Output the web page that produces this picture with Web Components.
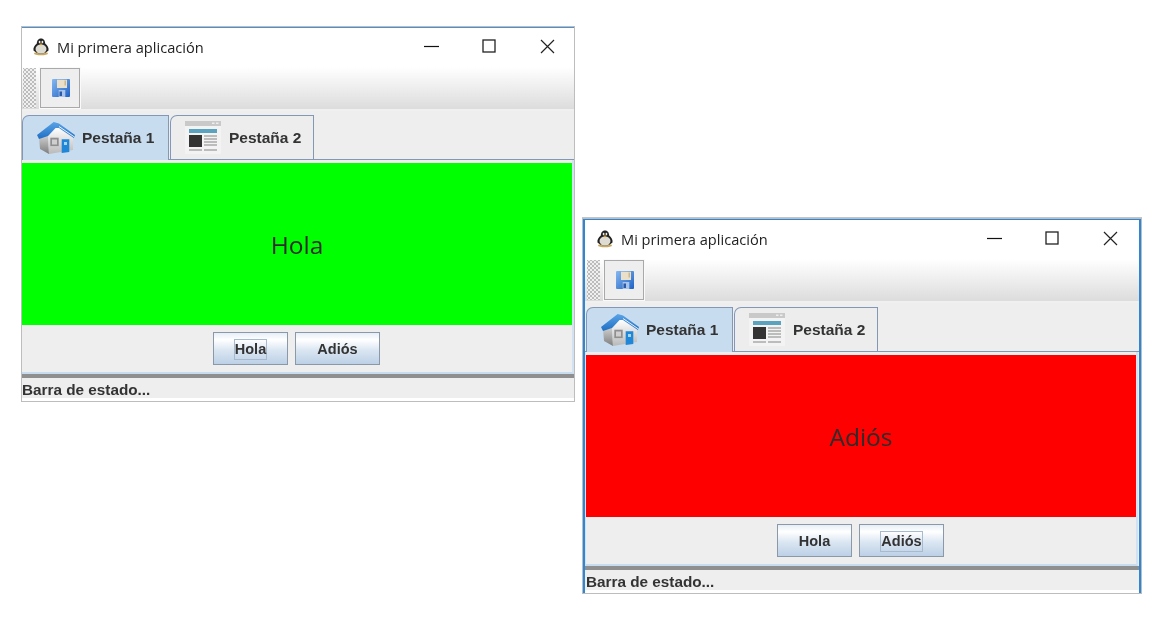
<!DOCTYPE html>
<html lang="es">
<head>
<meta charset="utf-8">
<title>Mi primera aplicación</title>
<style>
    html, body { margin: 0; height: 100%; background: #fff; }
    body { position: relative; width: 1166px; height: 629px; overflow: hidden; }
    app-window.one { left: 21px; top: 26px; }
    app-window.two { left: 582px; top: 218px; }
</style>
</head>
<body>
<app-window class="one" caption="Mi primera aplicación" color="#00ff00" message="Hola" focus-btn="Hola"></app-window>
<app-window class="two" caption="Mi primera aplicación" color="#ff0000" message="Adiós" focus-btn="Adiós" active></app-window>

<script>
const PENGUIN = `<svg width="18" height="18" viewBox="0 0 18 18">
    <ellipse cx="9" cy="15.500" rx="7" ry="1.800" fill="#c7a860"/>
    <path d="M9 0.500C12 0.500 13 3 13.200 5.500C15.500 7 17 10 16.500 12.500C14.500 14.500 12 15.500 9 15.500C6 15.500 3.500 14.500 1.500 12.500C1 10 2.500 7 4.800 5.500C5 3 6 0.500 9 0.500z" fill="#222"/>
    <ellipse cx="9" cy="11" rx="5.500" ry="4.600" fill="#dedbd3"/>
    <ellipse cx="7.600" cy="4" rx="0.900" ry="1.200" fill="#eee"/>
    <ellipse cx="10.400" cy="4" rx="0.900" ry="1.200" fill="#eee"/>
    <path d="M7.300 5.600h3.400L9 7.600z" fill="#d9a227"/>
</svg>`

const FLOPPY = `<svg width="18" height="18" viewBox="0 0 18 18" style="margin-left:1px">
    <defs><linearGradient id="fl" x1="0" y1="0" x2="1" y2="1">
        <stop offset="0" stop-color="#86b8f0"/><stop offset="1" stop-color="#1f62c6"/>
    </linearGradient></defs>
    <rect width="18" height="18" rx="1" fill="url(#fl)"/>
    <rect x="5" y="0.700" width="10" height="8.300" fill="#eadfc8"/>
    <rect x="12.500" y="1.500" width="1.500" height="5" fill="#c9b78f"/>
    <rect x="6.700" y="11" width="6.600" height="7" fill="#a9c4ea"/>
    <rect x="7.500" y="12.500" width="2.500" height="4.500" fill="#2c5aa6"/>
</svg>`

const HOUSE = `<svg width="38" height="33" viewBox="0 0 38 33">
    <defs>
        <linearGradient id="wall" x1="0" y1="0" x2="0" y2="1">
            <stop offset="0" stop-color="#ffffff"/><stop offset="1" stop-color="#b9b9b9"/>
        </linearGradient>
        <linearGradient id="side" x1="0" y1="0" x2="0" y2="1">
            <stop offset="0" stop-color="#d0d0d0"/><stop offset="1" stop-color="#7d7d7d"/>
        </linearGradient>
        <linearGradient id="roof" x1="0" y1="0" x2="0" y2="1">
            <stop offset="0" stop-color="#5aa3e6"/><stop offset="1" stop-color="#1f6fc4"/>
        </linearGradient>
    </defs>
    <path d="M2 15L11 13.500L12 32L3 27z" fill="url(#side)"/>
    <path d="M11 14L18.500 6H22L36 16V28L12 32z" fill="url(#wall)"/>
    <path d="M0 13L16.700 0L22 1.500L38 13L37 16L22 6L18.500 6L11 14L2 17z" fill="url(#roof)"/>
    <path d="M22 4.500L37.500 15" stroke="#eaf2fa" stroke-width="1"/>
    <rect x="13.300" y="15.700" width="8.400" height="8.400" fill="#8f8f8f"/>
    <rect x="15" y="17.500" width="5" height="5" fill="#cfcfcf"/>
    <path d="M24.700 17.300H32.300V30L24.700 31z" fill="#1f86d8"/>
    <rect x="27" y="20" width="3" height="3" fill="#a6d5f5"/>
</svg>`

const PAGE = `<svg width="36" height="33" viewBox="0 0 36 33">
    <rect width="36" height="33" rx="1" fill="#f3f3f3"/>
    <rect width="36" height="5" fill="#c9c9c9"/>
    <rect x="27" y="1.500" width="2.500" height="1.500" fill="#eee"/><rect x="31" y="1.500" width="2.500" height="1.500" fill="#eee"/>
    <rect x="4" y="8" width="28" height="4" fill="#5aa2bd"/>
    <rect x="4" y="14" width="13" height="12" fill="#333"/>
    <path d="M19 15h13M19 18h13M19 21h13M19 24h13M4 29h13M19 29h13" stroke="#aaa" stroke-width="1.300"/>
</svg>`

customElements.define("java-button", class extends HTMLElement {
    connectedCallback() {
        if (this.shadowRoot) return
        this.attachShadow({mode: "open"}).innerHTML = `
            <style>
                :host {
                    display: flex;
                    align-items: center;
                    justify-content: center;
                    box-sizing: border-box;
                    height: 33px;
                    padding-top: 1px;
                    border: 1px solid #8a98a8;
                    background: linear-gradient(#e6eef6 0%, #ffffff 22%, #dbe6f2 55%, #bcd0e6 100%);
                    font: bold 14.500px "Liberation Sans", sans-serif;
                    color: #333;
                }
                span { padding: 1px 0 2px; border: 1px solid transparent; }
                :host([focused]) span { border-color: #a8bacd; }
            </style>
            <span><slot></slot></span>
        `
    }
})

customElements.define("window-tab", class extends HTMLElement {
    connectedCallback() {
        if (this.shadowRoot) return
        this.attachShadow({mode: "open"}).innerHTML = `
            <style>
                :host {
                    display: flex;
                    align-items: center;
                    box-sizing: border-box;
                    height: 44px;
                    padding-left: 14px;
                    gap: 8px;
                    border: 1px solid #8298b6;
                    border-bottom: 0;
                    border-top-left-radius: 7px 7px;
                    background: #ededed;
                    font: bold 15.500px "Liberation Sans", sans-serif;
                    color: #333;
                }
                :host([selected]) { height: 45px; background: #c8dcf0; gap: 7px; }
                ::slotted(span) { flex: none; }
            </style>
            <slot name="icon"></slot>
            <slot></slot>
        `
    }
})

customElements.define("app-window", class extends HTMLElement {
    connectedCallback() {
        if (this.shadowRoot) return
        const focus = this.getAttribute("focus-btn")
        this.attachShadow({mode: "open"}).innerHTML = `
            <style>
                :host {
                    position: absolute;
                    display: block;
                    box-sizing: border-box;
                    width: 554px;
                    height: 376px;
                    border: 1px solid #bdbdbd;
                    background: #fff;
                    filter: blur(0.35px);
                    --inset: 0px;
                    --ctl-shift: -2px;
                }
                :host([active]) {
                    width: 560px;
                    --inset: 1px;
                    --ctl-shift: 0px;
                    box-shadow: 0 -1px 0 #c4c4c4;
                }
                .frame {
                    display: flex;
                    flex-direction: column;
                    height: 100%;
                    box-sizing: border-box;
                    border-top: 1px solid #4f90d0;
                    padding-bottom: 3px;
                }
                :host([active]) .frame {
                    border: 2px solid #2d86d6;
                    border-width: 1px 2px 0 2px;
                }
                .title {
                    flex: none;
                    height: 39px;
                    box-sizing: border-box;
                    display: flex;
                    align-items: center;
                    padding: 0 0 2px 10px;
                    font: 14.600px "Open Sans", sans-serif;
                    color: #222;
                    background: #fff;
                }
                :host([active]) .title { padding-left: 11px; }
                .title .cap { margin-left: 7px; flex: 1; }
                .ctl { width: 58px; height: 30px; display: flex; align-items: center; justify-content: center; }
                .title .ctl:last-child { margin-right: var(--ctl-shift); }
                .toolbar {
                    flex: none;
                    height: 44px;
                    box-sizing: border-box;
                    display: flex;
                    gap: 4px;
                    padding: 1px 0 1px calc(1px + var(--inset));
                    background: linear-gradient(#ffffff 0%, #dcdcdc 100%);
                    border-bottom: 2px solid #f0f0f0;
                }
                .grip {
                    width: 13px;
                    background-color: #f0f0f0;
                    background-image: radial-gradient(#bcbcbc 35%, transparent 50%), radial-gradient(#bcbcbc 35%, transparent 50%);
                    background-size: 4px 4px;
                    background-position: 0 0, 2px 2px;
                }
                .tool {
                    width: 40px;
                    box-sizing: border-box;
                    border: 1px solid #a9a9a9;
                    box-shadow: 0 0 0 1px #fafafa;
                    background: #eeeeee;
                    display: flex;
                    align-items: center;
                    justify-content: center;
                }
                .body {
                    flex: none;
                    background: #eeeeee;
                }
                .tabs {
                    display: flex;
                    align-items: flex-start;
                    gap: 1px;
                    height: 49px;
                    padding: 4px 0 0 var(--inset);
                    box-sizing: border-box;
                    border-bottom: 1px solid #8298b6;
                }
                .tabs window-tab:first-child { width: 147px; }
                .tabs window-tab:last-child { width: 144px; }
                .panel {
                    border-right: 2px solid #d3e2f2;
                    border-left: var(--inset) solid #d3e2f2;
                    border-bottom: 2px solid #c8dcf0;
                    margin-right: var(--inset);
                    padding-top: 3px;
                }
                .canvas {
                    height: 162px;
                    display: flex;
                    align-items: center;
                    justify-content: center;
                    background: ${this.getAttribute("color")};
                    font: 24.500px "Open Sans", sans-serif;
                    color: #2c2c2c;
                }
                .buttons {
                    height: 47px;
                    display: flex;
                    justify-content: center;
                    gap: 7px;
                    padding: 7px 1px 0 0;
                    box-sizing: border-box;
                }
                .buttons java-button:first-child { width: 75px; }
                .buttons java-button:last-child { width: 85px; }
                .status {
                    flex: none;
                    height: 24px;
                    box-sizing: border-box;
                    border-top: 4px solid #8f8f8f;
                    background: #eeeeee;
                    font: bold 15.300px/23px "Liberation Sans", sans-serif;
                    color: #333;
                    padding-left: var(--inset);
                }
            </style>
            <div class="frame">
                <div class="title">
                    ${PENGUIN}
                    <span class="cap">${this.getAttribute("caption")}</span>
                    <div class="ctl"><svg width="15" height="15"><path d="M0 7.500H15" stroke="#111" stroke-width="1.200"/></svg></div>
                    <div class="ctl"><svg width="15" height="15"><rect x="1" y="1" width="12" height="12" fill="none" stroke="#222" stroke-width="1.300"/></svg></div>
                    <div class="ctl"><svg width="15" height="15"><path d="M1 1L14 14M14 1L1 14" stroke="#222" stroke-width="1.200"/></svg></div>
                </div>
                <div class="toolbar">
                    <div class="grip"></div>
                    <div class="tool">${FLOPPY}</div>
                </div>
                <div class="body">
                    <div class="tabs">
                        <window-tab selected><span slot="icon" style="display:flex">${HOUSE}</span>Pestaña 1</window-tab>
                        <window-tab><span slot="icon" style="display:flex">${PAGE}</span>Pestaña 2</window-tab>
                    </div>
                    <div class="panel">
                        <div class="canvas">${this.getAttribute("message")}</div>
                        <div class="buttons">
                            <java-button ${focus == "Hola" ? "focused" : ""}>Hola</java-button>
                            <java-button ${focus == "Adiós" ? "focused" : ""}>Adiós</java-button>
                        </div>
                    </div>
                </div>
                <div class="status">Barra de estado...</div>
            </div>
        `
    }
})
</script>
</body>
</html>
